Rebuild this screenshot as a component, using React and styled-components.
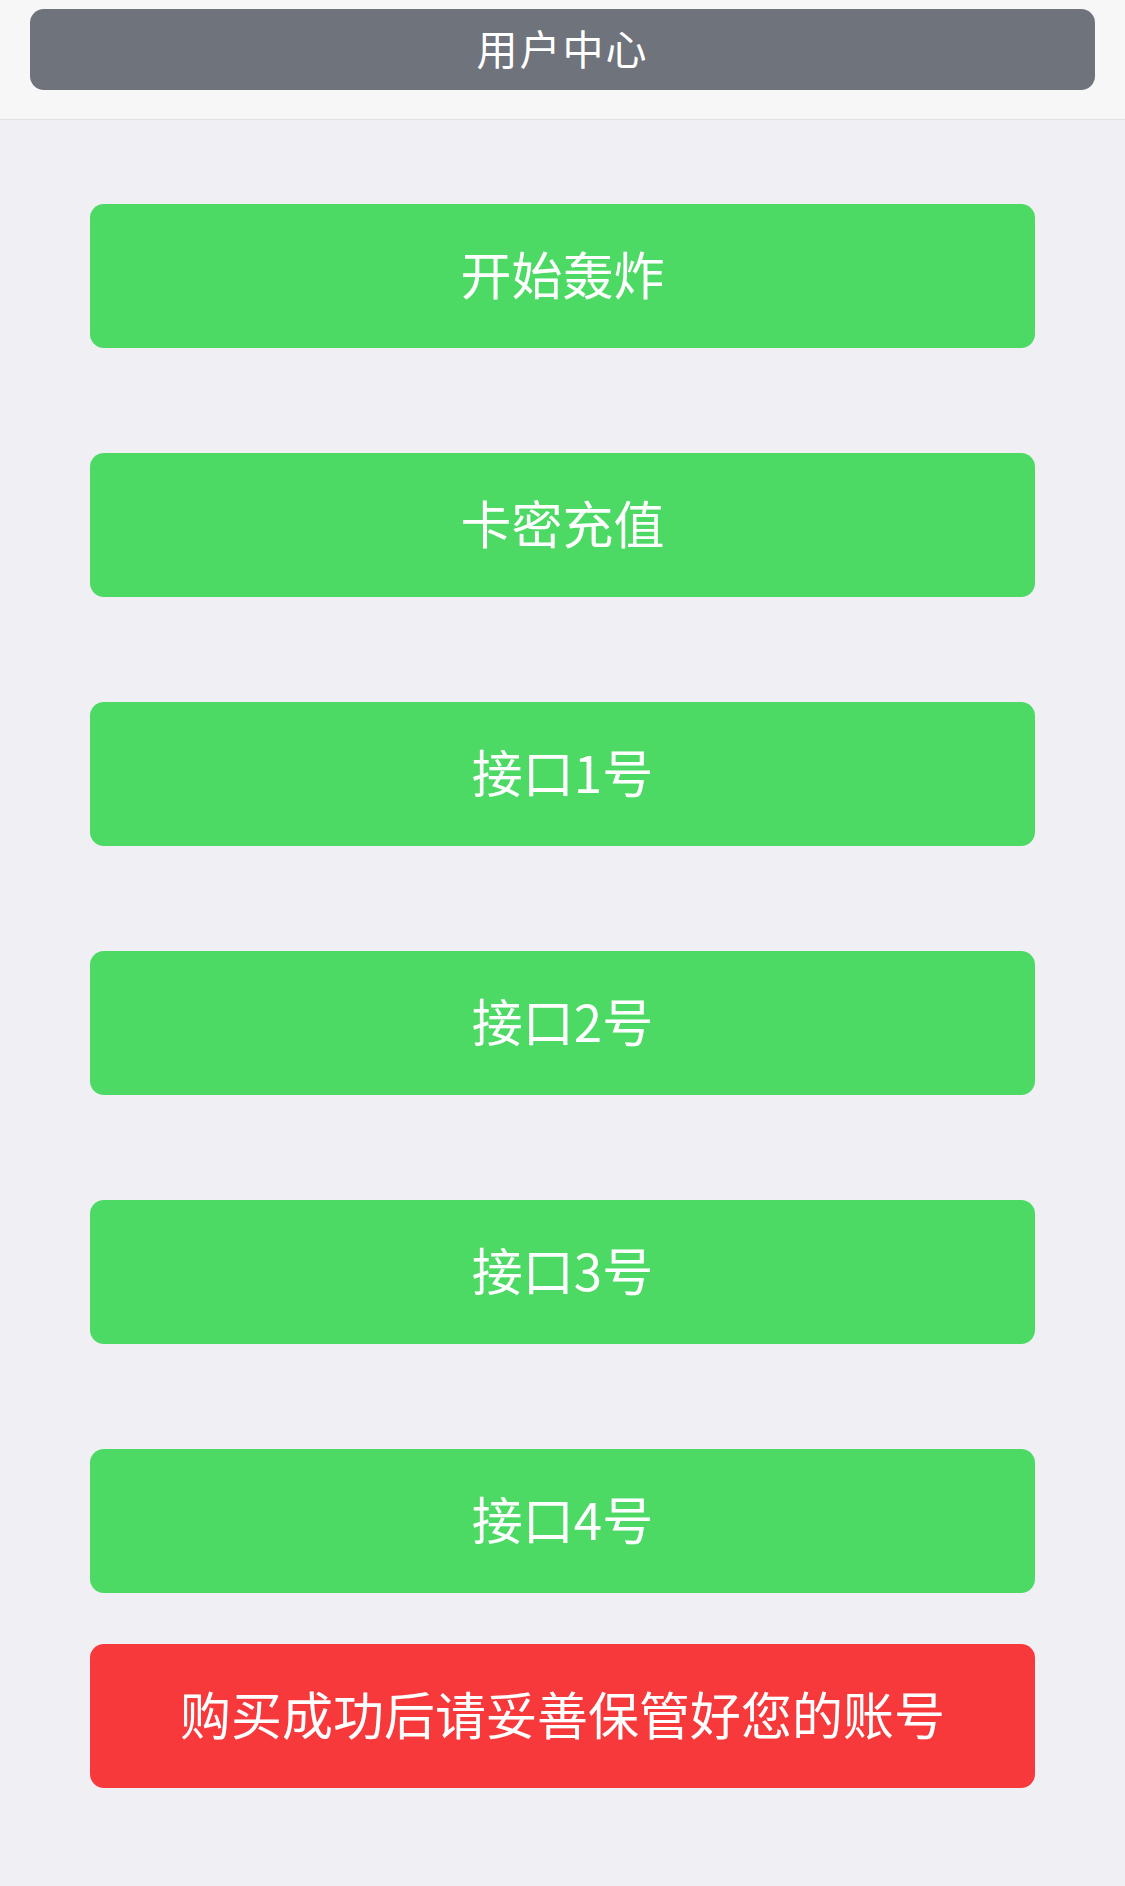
import React from 'react'
import styled, { createGlobalStyle } from 'styled-components'

const GlobalStyle = createGlobalStyle`
  html, body {
    margin: 0;
    padding: 0;
    background: #efeff4;
    font-family: "Noto Sans CJK SC", "Noto Sans", sans-serif;
  }
`

const Page = styled.div`
  min-height: 1886px;
  background: #efeff4;
`
const Header = styled.header`
  box-sizing: border-box;
  height: 120px;
  padding: 9px 30px 0;
  background: #f7f7f7;
  border-bottom: solid 1px #e2e2e4;
`
const HeaderBar = styled.div`
  box-sizing: border-box;
  height: 81px;
  padding-bottom: 5px;
  border-radius: 14px;
  background: #6f737b;
  color: #fff;
  display: flex;
  align-items: center;
  justify-content: center;
  font-size: 41px;
  line-height: 1;
  letter-spacing: 2px;
`
const Content = styled.main`
  display: flex;
  flex-direction: column;
  padding: 84px 90px 0;
`
const Menu = styled.div`
  display: flex;
  flex-direction: column;
  gap: 105px;
`
const Button = styled.a`
  box-sizing: border-box;
  display: flex;
  align-items: center;
  justify-content: center;
  height: 144px;
  padding-bottom: 6px;
  border-radius: 14px;
  background: ${p => (p.$danger ? '#f7393c' : '#4cd964')};
  margin-top: ${p => (p.$danger ? '51px' : '0')};
  color: #fff;
  font-size: 51px;
  line-height: 1;
  text-decoration: none;
`

const items = ['开始轰炸', '卡密充值', '接口1号', '接口2号', '接口3号', '接口4号']

const App = () => (
  <Page>
    <GlobalStyle />
    <Header>
      <HeaderBar>用户中心</HeaderBar>
    </Header>
    <Content>
      <Menu>
        {items.map(label => (
          <Button key={label} href="#">{label}</Button>
        ))}
      </Menu>
      <Button $danger href="#">购买成功后请妥善保管好您的账号</Button>
    </Content>
  </Page>
)

export default App
